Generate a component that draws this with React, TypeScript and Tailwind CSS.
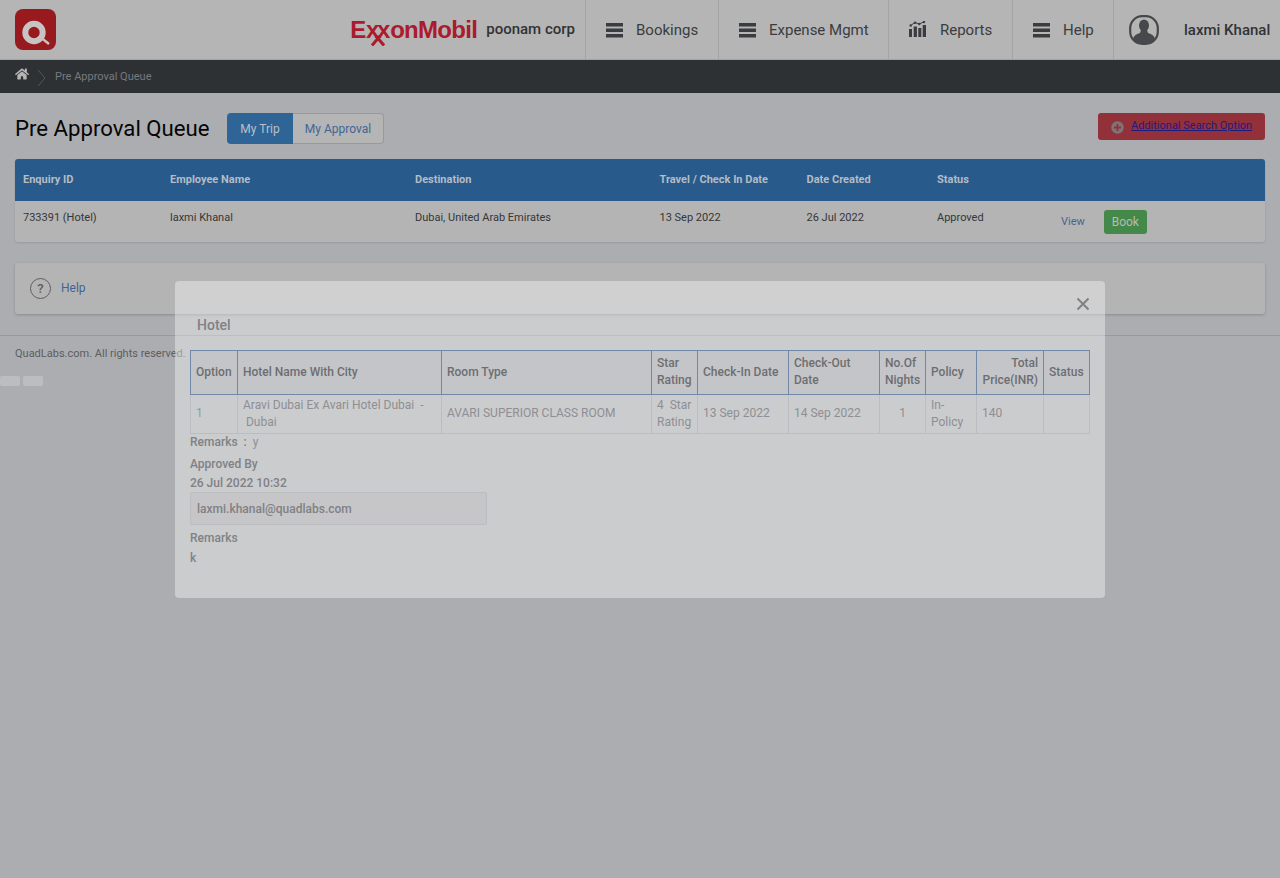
import { FaHome } from "react-icons/fa";

const NAV = [
  { label: "Bookings", icon: "menu", w: "w-[133px]" },
  { label: "Expense Mgmt", icon: "menu", w: "w-[170px]" },
  { label: "Reports", icon: "chart", w: "w-[124px]" },
  { label: "Help", icon: "menu", w: "w-[101px]" },
];

const MODAL_HEAD = [
  { label: "Option", w: "w-[47px]", cls: "" },
  { label: "Hotel Name With City", w: "w-[204px]", cls: "" },
  { label: "Room Type", w: "w-[210px]", cls: "" },
  { label: "Star Rating", w: "w-[46px]", cls: "" },
  { label: "Check-In Date", w: "w-[91px]", cls: "" },
  { label: "Check-Out Date", w: "w-[91px]", cls: "" },
  { label: "No.Of Nights", w: "w-[46px]", cls: "" },
  { label: "Policy", w: "w-[51px]", cls: "" },
  { label: "Total Price(INR)", w: "w-[67px]", cls: "text-right" },
  { label: "Status", w: "w-[46px]", cls: "" },
];

function MenuIcon() {
  return (
    <svg width="17" height="16" viewBox="0 0 17 16" className="shrink-0">
      <rect x="0" y="1" width="17" height="3.5" fill="#3a3c3f" />
      <rect x="0" y="6.5" width="17" height="3.5" fill="#3a3c3f" />
      <rect x="0" y="12" width="17" height="3.5" fill="#3a3c3f" />
    </svg>
  );
}

function ChartIcon() {
  return (
    <svg width="18" height="17" viewBox="0 0 18 17" className="shrink-0">
      <rect x="0" y="8" width="3" height="8" fill="#3a3c3f" />
      <rect x="4.7" y="5.5" width="3.2" height="10.5" fill="#3a3c3f" />
      <rect x="9.3" y="7" width="3" height="9" fill="#3a3c3f" />
      <rect x="13.7" y="4" width="3.3" height="12" fill="#3a3c3f" />
      <path d="M1.7 4.5 L6 1.5 L10.3 3 L15 0.8" fill="none" stroke="#3a3c3f" strokeWidth="1" />
      <circle cx="1.7" cy="4.5" r="1.2" fill="#3a3c3f" />
      <circle cx="6" cy="1.7" r="1.2" fill="#3a3c3f" />
      <circle cx="10.3" cy="3" r="1.2" fill="#3a3c3f" />
      <circle cx="15" cy="1" r="1.2" fill="#3a3c3f" />
    </svg>
  );
}

function QLogo() {
  return (
    <div className="-mt-[1px] w-[41px] h-[41px] rounded-[8px] bg-[#991a1e] overflow-hidden">
      <svg width="41" height="41" viewBox="0 0 41 41">
        <circle cx="19" cy="23.5" r="8.7" fill="none" stroke="#c8c4c4" strokeWidth="6" />
        <path d="M24 27 L34 35" stroke="#c8c4c4" strokeWidth="2.5" />
      </svg>
    </div>
  );
}

function ExxonLogo() {
  return (
    <div className="relative flex items-baseline font-['Liberation_Sans',sans-serif] font-bold text-[24px] leading-none text-[#ab1a2d] h-[24px]">
      <span className="tracking-[-0.3px]">E</span>
      <span className="tracking-[-0.3px]">x</span>
      <span className="-ml-[2px] tracking-[-0.3px]">x</span>
      <span className="tracking-[-0.7px]">onMobil</span>
      {/* tails of the interlocked x pair */}
      <svg width="18" height="12" viewBox="0 0 18 12" className="absolute left-[19px] top-[16px]">
        <path d="M7 2 L15 11.5" stroke="#ab1a2d" strokeWidth="3" />
        <path d="M11 2 L3 11.5" stroke="#ab1a2d" strokeWidth="3" />
      </svg>
    </div>
  );
}

function UserIcon() {
  return (
    <svg width="30" height="30" viewBox="0 0 30 30">
      <rect x="1.2" y="1.2" width="27.6" height="27.6" rx="12" fill="none" stroke="#46484b" strokeWidth="2.2" />
      <g fill="#46484b">
        <ellipse cx="15" cy="10.5" rx="5" ry="6" />
        <path d="M12 15 L18 15 L19 18 C23 19 25.5 21 26 24 C23 28 19 29 15 29 C11 29 7 28 4 24 C4.5 21 7 19 11 18 Z" />
      </g>
    </svg>
  );
}

export default function App() {
  return (
    <div className="relative min-h-[878px] bg-[#acadb1] font-['Roboto',sans-serif] overflow-hidden">
      {/* Top header */}
      <header className="h-[60px] bg-[#b5b5b5] flex items-center border-b border-[#a4a4a5]">
        <div className="pl-[15px]">
          <QLogo />
        </div>
        <div className="ml-auto flex items-center h-full">
          <ExxonLogo />
          <span className="ml-[9px] mr-[10px] text-[15px] font-medium text-[#313336]">poonam corp</span>
          {NAV.map((n) => (
            <div key={n.label} className={`${n.w} h-full flex items-center gap-[13px] pl-5 border-l border-[#a4a4a5]`}>
              {n.icon === "menu" ? <MenuIcon /> : <ChartIcon />}
              <span className="relative top-[1px] text-[15px] text-[#3a3c3f] whitespace-nowrap">{n.label}</span>
            </div>
          ))}
          <div className="w-[167px] h-full flex items-center pl-[15px] border-l border-[#a4a4a5]">
            <UserIcon />
            <span className="relative top-[1px] ml-[25px] text-[15px] font-medium text-[#313336] whitespace-nowrap">laxmi Khanal</span>
          </div>
        </div>
      </header>

      {/* Breadcrumb */}
      <div className="h-[33px] bg-[#2e3134] flex items-center pl-[15px]">
        <FaHome className="text-[#b5b5b5] text-[14px] -mt-[5px]" />
        <svg width="10" height="18" viewBox="0 0 10 18" className="ml-[8px] mt-[2px]">
          <path d="M1 1 L8 9 L1 17" fill="none" stroke="#54575a" strokeWidth="1" />
        </svg>
        <span className="ml-2 mt-[1px] text-[11px] text-[#77797c]">Pre Approval Queue</span>
      </div>

      {/* Page title row */}
      <div className="px-[15px] pt-5 flex items-start">
        <h1 className="w-[212px] text-[22.2px] leading-[31px] text-[#050505] whitespace-nowrap">Pre Approval Queue</h1>
        <div className="flex h-[31px] text-[12px]">
          <span className="w-[66px] rounded-l-[4px] bg-[#2f6596] text-[#b9c1c9] flex items-center justify-center">My Trip</span>
          <span className="w-[91px] rounded-r-[4px] border border-l-0 border-[#98999c] bg-[#b5b5b5] text-[#3f6595] flex items-center justify-center">My Approval</span>
        </div>
        <div className="ml-auto w-[167px] h-[27px] rounded-[3px] bg-[#93313b] flex items-center pl-[13px] gap-[7px]">
          <svg width="13" height="13" viewBox="0 0 13 13" className="mt-[1px]">
            <circle cx="6.5" cy="6.5" r="6.2" fill="#7a7577" />
            <path d="M6.5 3 V10 M3 6.5 H10" stroke="#93313b" strokeWidth="1.8" />
          </svg>
          <span className="text-[11px] text-[#1f1b7c] underline whitespace-nowrap">Additional Search Option</span>
        </div>
      </div>

      {/* Queue table */}
      <div className="mx-[15px] mt-[15px] rounded-[3px] overflow-hidden bg-[#b4b4b4] shadow-[0_1px_2px_rgba(0,0,0,0.12)]">
        <table className="w-full table-fixed border-collapse text-[11px]">
          <colgroup>
            <col className="w-[147px]" />
            <col className="w-[245px]" />
            <col className="w-[244.5px]" />
            <col className="w-[147px]" />
            <col className="w-[130.5px]" />
            <col className="w-[124px]" />
            <col />
          </colgroup>
          <thead>
            <tr className="h-[42px] bg-[#285a8c] text-[#b4bcc4]">
              {["Enquiry ID", "Employee Name", "Destination", "Travel / Check In Date", "Date Created", "Status", ""].map((h) => (
                <th key={h} className="pl-2 text-left font-bold">{h}</th>
              ))}
            </tr>
          </thead>
          <tbody>
            <tr className="h-[41px] text-[#353638] align-top">
              <td className="pl-2 pt-[9px]">733391 (Hotel)</td>
              <td className="pl-2 pt-[9px]">laxmi Khanal</td>
              <td className="pl-2 pt-[9px]">Dubai, United Arab Emirates</td>
              <td className="pl-2 pt-[9px]">13 Sep 2022</td>
              <td className="pl-2 pt-[9px]">26 Jul 2022</td>
              <td className="pl-2 pt-[9px]">Approved</td>
              <td className="pl-2 pt-[9px]">
                <div className="flex items-center">
                  <span className="text-[#46648c]">View</span>
                  <span className="ml-[19px] w-[43px] h-[24px] rounded-[3px] bg-[#44894a] text-[#b4bcb4] text-[12px] flex items-center justify-center">Book</span>
                </div>
              </td>
            </tr>
          </tbody>
        </table>
      </div>

      {/* Help panel */}
      <div className="mx-[15px] mt-[21px] h-[51px] rounded-[3px] bg-[#b4b4b4] shadow-[0_1px_3px_rgba(0,0,0,0.2)] flex items-center pl-[15px]">
        <span className="w-[21px] h-[21px] rounded-full border border-[#5e5f62] text-[#5e5f62] text-[13px] font-medium flex items-center justify-center">?</span>
        <span className="ml-[10px] -mt-[2px] text-[12px] text-[#3f6595]">Help</span>
      </div>

      {/* Footer */}
      <footer className="mt-[21px] border-t border-[#98999c] pt-[11px] pl-[15px]">
        <p className="text-[11px] leading-[13px] text-[#5c5d60]">QuadLabs.com. All rights reserved.</p>
      </footer>
      <div className="mt-4 flex gap-[3px]">
        <span className="w-5 h-[10px] rounded-[2px] bg-[#bcbdc0]" />
        <span className="w-5 h-[10px] rounded-[2px] bg-[#bcbdc0]" />
      </div>

      {/* Hotel details modal */}
      <div className="absolute left-[175px] top-[281px] w-[930px] h-[317px] rounded-[4px] bg-white/[.38] text-[12px]">
        <button className="absolute right-[15px] top-[16px] text-[#808184]">
          <svg width="14" height="14" viewBox="0 0 14 14">
            <path d="M1.5 1.5 L12.5 12.5 M12.5 1.5 L1.5 12.5" stroke="currentColor" strokeWidth="2" />
          </svg>
        </button>
        <div className="h-[55px] pl-[22px] pt-[36px] border-b border-[#bdbec0]">
          <h2 className="text-[14px] leading-4 font-medium text-[#808184]">Hotel</h2>
        </div>
        <div className="px-[15px] pt-[14px]">
          <table className="w-[900px] table-fixed border-collapse leading-[17px]">
            <colgroup>
              {MODAL_HEAD.map((h) => (
                <col key={h.label} className={h.w} />
              ))}
            </colgroup>
            <thead>
              <tr className="h-[44px] bg-[#c4c5c8] text-[#6d6e71]">
                {MODAL_HEAD.map((h) => (
                  <th key={h.label} className={`border border-[#7288a8] px-[5px] pb-[1px] font-medium text-left ${h.cls}`}>{h.label}</th>
                ))}
              </tr>
            </thead>
            <tbody>
              <tr className="h-[39px] text-[#8e8f92]">
                <td className="border border-[#bcbdc0] px-[5px] pb-[2px] text-[#84a09c]">1</td>
                <td className="border border-[#bcbdc0] px-[5px]">
                  Aravi Dubai Ex Avari Hotel Dubai&nbsp; -
                  <br />
                  &nbsp;Dubai
                </td>
                <td className="border border-[#bcbdc0] px-[5px] pb-[2px]">AVARI SUPERIOR CLASS ROOM</td>
                <td className="border border-[#bcbdc0] px-[5px]">
                  4&nbsp; Star Rating
                </td>
                <td className="border border-[#bcbdc0] px-[5px] pb-[2px]">13 Sep 2022</td>
                <td className="border border-[#bcbdc0] px-[5px] pb-[2px]">14 Sep 2022</td>
                <td className="border border-[#bcbdc0] px-[5px] pb-[2px] text-center">1</td>
                <td className="border border-[#bcbdc0] px-[5px]">In-Policy</td>
                <td className="border border-[#bcbdc0] px-[5px] pb-[2px]">140</td>
                <td className="border border-[#bcbdc0] px-[5px]"></td>
              </tr>
            </tbody>
          </table>
          <p className="mt-[1px] h-[15px] leading-[15px] text-[#808184]">
            <span className="font-medium">Remarks&nbsp; :&nbsp; </span>
            <span className="text-[#8e8f92]">y</span>
          </p>
          <p className="mt-[7px] leading-[15px] font-medium text-[#808184]">Approved By</p>
          <p className="mt-1 leading-[15px] font-medium text-[#808184]">26 Jul 2022 10:32</p>
          <div className="mt-[1px] w-[297px] h-[33px] rounded-[2px] border border-[#bcbdc0] bg-[#c6c6c8] pl-[6px] flex items-center font-medium text-[#808184]">
            laxmi.khanal@quadlabs.com
          </div>
          <p className="mt-[6px] leading-[15px] font-medium text-[#808184]">Remarks</p>
          <p className="mt-[5px] leading-[15px] font-medium text-[#808184]">k</p>
        </div>
      </div>
    </div>
  );
}
